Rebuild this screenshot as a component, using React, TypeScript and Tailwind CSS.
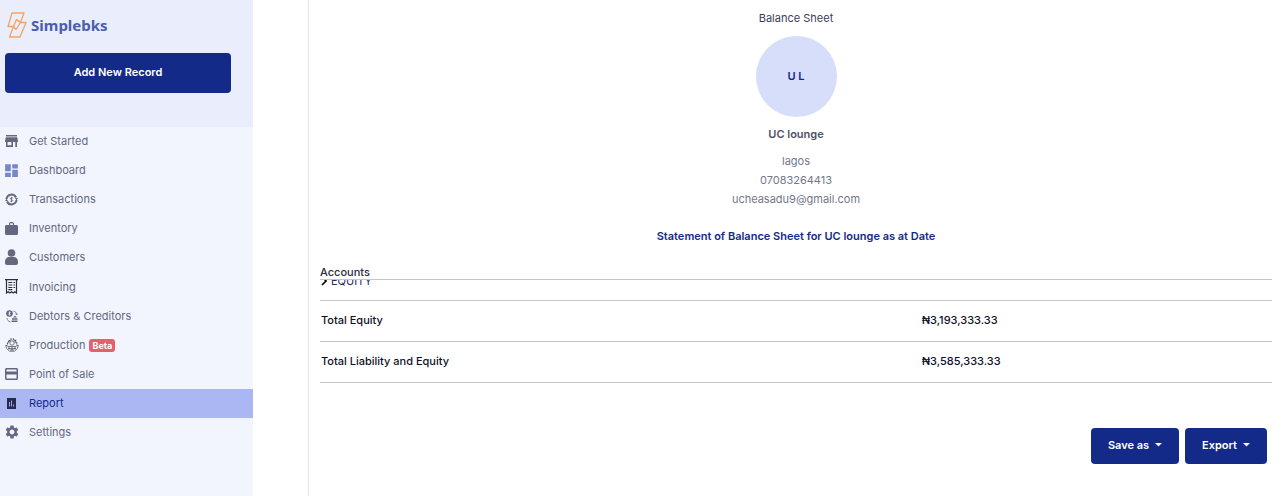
import { ReactNode } from "react";
import { MdDashboard, MdSettings } from "react-icons/md";

const ink = "#64687f";

function Logo() {
  return (
    <svg width="20" height="26" viewBox="0 0 20 26" fill="none" stroke="#f5a55c" strokeWidth="1.3" strokeLinejoin="round" aria-hidden="true">
      <path d="M5 1h12l-3.500 9.500h5.500L13 25H2.500l4-10.500H1z" />
      <path d="M6.500 14.500L9.500 7.500l4 3" />
      <path d="M9.500 7.500l4 3-4.500 7-2.500-3" />
    </svg>
  );
}

function StoreIcon() {
  return (
    <svg width="13" height="12" viewBox="0 0 13 12" fill={ink}>
      <path d="M1 0h11v1.500H1zM.8 2.200h11.400L13 6v1h-1v5h-1.700V7H8v5H1V7H0V6zM2.600 7v3.300h3.800V7z" fillRule="evenodd" />
    </svg>
  );
}

function CoinIcon() {
  return (
    <svg width="13" height="13" viewBox="0 0 13 13" fill="none" stroke={ink}>
      <path d="M1.500 6a5 5 0 0 1 9.500-1.500M11.500 7a5 5 0 0 1-9.500 1.500" strokeWidth="2" />
      <path d="M10 5h3l-1.500 2.500zM0 8h3L1.500 5.500z" fill={ink} stroke="none" />
      <path d="M7.800 4.800c-2.600-.9-3.400 1.300-1.300 1.700s1.300 2.600-1.300 1.700M6.500 3.800v5.400" strokeWidth=".8" />
    </svg>
  );
}

function BagIcon() {
  return (
    <svg width="13" height="13" viewBox="0 0 13 13" fill={ink}>
      <path d="M4 3V1.200L5.200 0h2.600L9 1.200V3h3l1 1v8l-1 1H1l-1-1V4l1-1zM5.200 3h2.600V1.300H5.200z" fillRule="evenodd" />
    </svg>
  );
}

function PersonIcon() {
  return (
    <svg width="13" height="16" viewBox="0 0 13 16" fill={ink}>
      <circle cx="6.500" cy="4" r="3.800" />
      <path d="M3.200 8h6.600c2 .6 3.200 2.300 3.200 4.500V14c0 1.200-.8 2-2 2H2c-1.200 0-2-.8-2-2v-1.500C0 10.300 1.200 8.600 3.200 8z" />
    </svg>
  );
}

function InvoiceIcon() {
  return (
    <svg width="13" height="15" viewBox="0 0 13 15" fill="none" stroke="#2b2d38">
      <path d="M0 .7h13M1.500.700V14l1.700-1.200L4.800 14l1.700-1.200L8.200 14l1.600-1.200 1.700 1.200V.700" strokeWidth="1.200" />
      <path d="M3.300 3.500h4M8.500 3.500h1.500M3.300 6h4M8.500 6h1.500M3.300 8.500h4M8.500 8.500h1.500M3.300 10.700h4" strokeWidth="1.200" />
    </svg>
  );
}

function DebtIcon() {
  return (
    <svg width="12" height="13" viewBox="0 0 12 13" fill="none" stroke={ink}>
      <circle cx="3.500" cy="3.500" r="3.300" fill={ink} stroke="none" />
      <path d="M4.600 2.500c-2-.6-2.600.8-1 1.100s1 1.700-1.200 1M3.500 1.500v4" stroke="#f2f5fd" strokeWidth=".7" />
      <path d="M7.500 1.200c2 .3 3 1.500 3.200 3.200M9.300 3.500l1.400 1.400 1.200-1.400M1 8c.2 2 1.300 3.500 3.500 4" strokeWidth=".8" />
      <path d="M6.800 7.500L9 5.800l2 1.700zM6 8.300h5.500v1.500H6zM5.500 10.500h6V12h-6z" fill={ink} stroke="none" />
    </svg>
  );
}

function ProductionIcon() {
  return (
    <svg width="14" height="14" viewBox="0 0 14 14" fill="none" stroke="#55565e" strokeWidth=".8">
      <circle cx="7" cy="5" r="2.200" />
      <path d="M2.500 6.500V4.500l1.200-.5-.3-1.500 1.500.2L5.500 1h3l.6 1.700 1.500-.2-.3 1.500 1.500.5v2" strokeWidth="1.200" strokeDasharray="2 .6" />
      <path d="M.8 7.200l3 1.300h6.400l3-1.300-.6 3-3 3H4.400l-3-3zM3 10.500h8M5 12h4M4 8.500v3M10 8.500v3M7 8.500v4" />
    </svg>
  );
}

function CardIcon() {
  return (
    <svg width="13" height="12" viewBox="0 0 13 12" fill={ink}>
      <path d="M1 0h11l1 1v10l-1 1H1l-1-1V1zM1.500 1.500v2h10v-2zM1.500 6.500v4h10v-4z" fillRule="evenodd" />
    </svg>
  );
}

function ReportIcon() {
  return (
    <svg width="9" height="11" viewBox="0 0 9 11">
      <path d="M0 0h9v11H0z" fill="#262a52" />
      <path d="M2.500 4v4.500M4.500 2.500v6M6.500 6.500v2" stroke="#aab7f3" strokeWidth=".9" />
    </svg>
  );
}

const menu: { label: string; icon: ReactNode; beta?: boolean; active?: boolean; tall?: boolean }[] = [
  { label: "Get Started", icon: <StoreIcon /> },
  { label: "Dashboard", icon: <MdDashboard size={17} color="#7488c8" /> },
  { label: "Transactions", icon: <CoinIcon /> },
  { label: "Inventory", icon: <BagIcon /> },
  { label: "Customers", icon: <PersonIcon /> },
  { label: "Invoicing", icon: <InvoiceIcon />, tall: true },
  { label: "Debtors & Creditors", icon: <DebtIcon /> },
  { label: "Production", icon: <ProductionIcon />, beta: true },
  { label: "Point of Sale", icon: <CardIcon /> },
  { label: "Report", icon: <ReportIcon />, active: true },
  { label: "Settings", icon: <MdSettings size={16} color={ink} /> },
];

const totals = [
  { name: "Total Equity", amount: "₦3,193,333.33" },
  { name: "Total Liability and Equity", amount: "₦3,585,333.33" },
];

function Sidebar() {
  return (
    <aside className="w-[253px] shrink-0 bg-[#f2f5fd]">
      <div className="h-[127px] bg-[#e9edfc] pt-3 pr-[22px] pl-[5px]">
        <a href="#" className="flex h-[27px] items-center gap-1 pb-0.5 pl-[2px]">
          <Logo />
          <span className="font-['Noto_Sans',sans-serif] text-[15px] font-bold text-[#4b5dab]">Simplebks</span>
        </a>
        <button className="mt-[14px] h-10 w-full rounded bg-[#132a88] pb-0.5 text-[11px] font-semibold text-white">
          Add New Record
        </button>
      </div>
      <nav>
        {menu.map((item) => (
          <a
            key={item.label}
            href="#"
            className={`flex items-center pb-px pl-[5px] ${item.tall ? "h-[30px]" : "h-[29px]"} ${
              item.active ? "bg-[#aab7f3] text-[#132a88]" : "text-[#64687f]"
            }`}
          >
            <span className="mr-[11px] flex w-[13px] shrink-0 justify-center [&>svg]:shrink-0">{item.icon}</span>
            {item.label}
            {item.beta && (
              <span className="ml-1 rounded-[3px] bg-[#e4606d] px-[3px] text-[9px] leading-[13px] font-bold text-white">
                Beta
              </span>
            )}
          </a>
        ))}
      </nav>
    </aside>
  );
}

function MenuButton({ label }: { label: string }) {
  return (
    <button className="flex h-9 items-center gap-1.5 rounded bg-[#132a88] px-[17px] pb-0.5 text-[11px] font-semibold text-white">
      {label}
      <svg width="7" height="4" viewBox="0 0 7 4" fill="currentColor">
        <path d="M0 0h7L3.500 3.500z" />
      </svg>
    </button>
  );
}

export default function App() {
  return (
    <div className="flex min-h-screen bg-white font-['Inter',sans-serif] text-[11px] leading-[18px]">
      <Sidebar />
      <main className="ml-[55px] min-w-0 flex-1 border-l border-[#e3e6ee] pt-[9px] pr-[10px] pl-[11px]">
        <header className="flex flex-col items-center text-center text-[#74778a]">
          <h1 className="text-[#3d4058]">Balance Sheet</h1>
          <div className="mt-[9px] flex size-[81px] items-center justify-center rounded-full bg-[#d7defa] pb-px font-semibold text-[#132a88]">
            U L
          </div>
          <h2 className="mt-2 font-semibold text-[#4e5268]">UC lounge</h2>
          <div className="mt-[9px] leading-[19px]">
            <p>lagos</p>
            <p>07083264413</p>
            <p>ucheasadu9@gmail.com</p>
          </div>
          <h3 className="mt-[18px] font-semibold text-[#132a88]">
            Statement of Balance Sheet for UC lounge as at Date
          </h3>
        </header>
        <section className="mt-5">
          <div className="border-b border-[#c6c6c6] leading-[14px] font-medium text-[#2a2c40]">Accounts</div>
          <div className="flex h-[103px] items-end overflow-hidden">
            <table className="w-full table-fixed text-left text-[#0f1029]">
              <colgroup>
                <col className="w-[63.2%]" />
                <col />
              </colgroup>
              <tbody>
                <tr className="h-[41px] border-b border-[#c6c6c6]">
                  <td className="pt-[3px] pl-px" colSpan={2}>
                    <button className="flex items-center gap-1 text-[#2b2a66]">
                      <svg width="6" height="10" viewBox="0 0 6 10" fill="none" stroke="#000" strokeWidth="1.600">
                        <path d="M1 1l4 4-4 4" />
                      </svg>
                      EQUITY
                    </button>
                  </td>
                </tr>
                {totals.map((row) => (
                  <tr key={row.name} className="h-[41px] border-b border-[#c6c6c6]">
                    <th className="pb-0.5 pl-px font-medium">{row.name}</th>
                    <td className="pb-0.5 font-medium">{row.amount}</td>
                  </tr>
                ))}
              </tbody>
            </table>
          </div>
        </section>
        <div className="mt-[45px] flex justify-end gap-1.5 pr-[5px]">
          <MenuButton label="Save as" />
          <MenuButton label="Export" />
        </div>
      </main>
    </div>
  );
}
